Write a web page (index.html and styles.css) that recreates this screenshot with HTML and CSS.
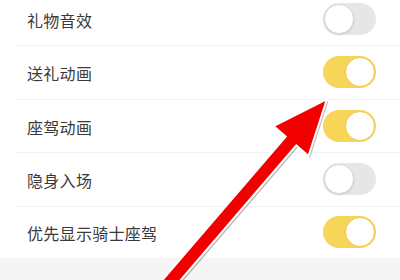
FILE: index.html
```html
<!DOCTYPE html>
<html lang="zh">
<head>
<meta charset="utf-8">
<link rel="stylesheet" href="styles.css">
</head>
<body>
<div class="page">
  <div class="list">
    <div class="row"><span class="label">礼物音效</span><span class="toggle off"><span class="knob"></span></span></div>
    <div class="row"><span class="label">送礼动画</span><span class="toggle on"><span class="knob"></span></span></div>
    <div class="row"><span class="label">座驾动画</span><span class="toggle on"><span class="knob"></span></span></div>
    <div class="row"><span class="label">隐身入场</span><span class="toggle off"><span class="knob"></span></span></div>
    <div class="row last"><span class="label">优先显示骑士座驾</span><span class="toggle on"><span class="knob"></span></span></div>
  </div>
  <div class="footer"></div>
  <svg class="arrow" width="400" height="280" viewBox="0 0 400 280">
    <polygon class="arrow-shadow" points="327,99 308.5,156 296.3,145.5 168.3,294.5 157.7,285.5 285.7,136.5 273.5,126" transform="translate(1.5,2)"/>
    <polygon class="arrow-body" points="327,99 308.5,156 296.3,145.5 168.3,294.5 157.7,285.5 285.7,136.5 273.5,126"/>
  </svg>
</div>
</body>
</html>
```
FILE: styles.css
```css
html, body {
  margin: 0;
  padding: 0;
  background: #fff;
}
.page {
  position: relative;
  width: 400px;
  height: 280px;
  overflow: hidden;
  font-family: "Noto Sans CJK SC", "Noto Sans", sans-serif;
  display: flex;
  flex-direction: column;
}
.list {
  margin-top: -7.5px;
  padding-left: 16px;
  display: flex;
  flex-direction: column;
}
.row {
  box-sizing: border-box;
  height: 53.5px;
  border-bottom: 1px solid #f1f1f1;
  display: flex;
  align-items: center;
  justify-content: space-between;
  padding-left: 11px;
  padding-right: 24px;
}
.row.last {
  border-bottom: none;
  height: 51px;
}
.label {
  font-size: 16px;
  color: #3a3a3a;
  padding-top: 2px;
  letter-spacing: 0.3px;
}
.toggle {
  box-sizing: border-box;
  width: 53px;
  height: 32px;
  border-radius: 16px;
  display: flex;
  align-items: center;
  padding: 1px;
}
.toggle.off {
  background: #e6e6e6;
  justify-content: flex-start;
}
.toggle.on {
  background: #f6d558;
  justify-content: flex-end;
}
.knob {
  box-sizing: border-box;
  width: 30px;
  height: 30px;
  border-radius: 50%;
  background: #fff;
}
.toggle.off .knob {
  border: 1px solid #d9d9d9;
  box-shadow: 0 1px 2px rgba(0,0,0,0.12);
}
.toggle.on .knob {
  border: 1px solid #ecc94a;
}
.footer {
  flex: 1;
  background: #f5f5f5;
}
.arrow {
  position: absolute;
  left: 0;
  top: 0;
}
.arrow-shadow {
  fill: #8a8a8a;
  opacity: 0.6;
}
.arrow-body {
  fill: #f20000;
  stroke: #fff;
  stroke-width: 2;
  stroke-linejoin: miter;
}
```
